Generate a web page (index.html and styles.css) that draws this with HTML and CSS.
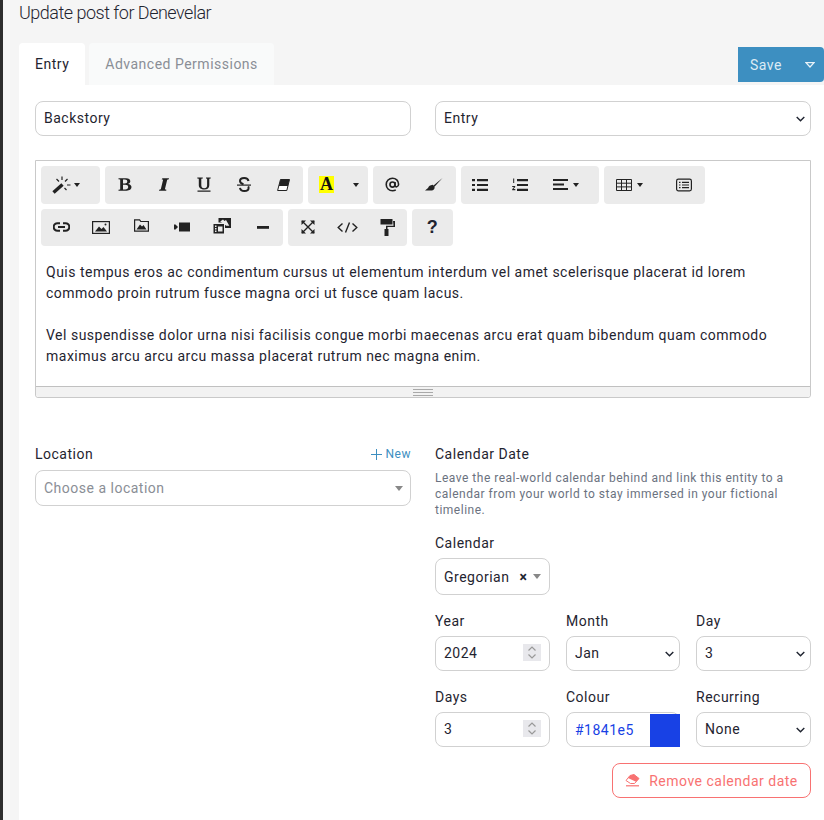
FILE: index.html
```html
<html>
    <head>
        <meta charset="utf-8">
        <title>Update post for Denevelar</title>
        <link rel="stylesheet" href="styles.css">
    </head>
    <body>
    <div class="sidebar"></div>
    <div class="main">
        <h1 class="page-title">Update post for Denevelar</h1>

        <div class="top-row">
            <div class="tabs">
                <div class="tab tab-active">Entry</div>
                <div class="tab">Advanced Permissions</div>
            </div>
            <div class="save-btn">
                <span>Save</span>
                <svg class="save-caret" width="10" height="6" viewBox="0 0 10 6"><path d="M1 .7h8L5 5z" fill="none" stroke="#e8f2f8" stroke-width="1.200"/></svg>
            </div>
        </div>

        <div class="panel">
            <div class="two-col">
                <input class="field" type="text" value="Backstory">
                <select class="field"><option>Entry</option></select>
            </div>

            <div class="editor">
                <div class="toolbar">
                    <div class="group">
                        <div class="tool tool-wide">
                            <svg width="19" height="18" viewBox="0 0 19 18"><path d="M1.500 16.500 10.500 8.500" stroke="#222" stroke-width="3.400"/><path d="M10 .5v3.500M15 9h3.500M4.500 3l2.500 2.500M15.500 3 13 5.500M14.500 14l-2-2" stroke="#222" stroke-width="1.200"/></svg>
                            <i class="caret"></i>
                        </div>
                    </div>
                    <div class="group">
                        <div class="tool"><svg width="14" height="13" viewBox="0 0 14 13"><path fill-rule="evenodd" d="M.5.3h7.500c2.800 0 4.300 1 4.300 2.900 0 1.400-1 2.300-2.300 2.700 1.900.3 3.500 1.300 3.500 3.200 0 2.300-2 3.600-4.800 3.600H.5v-1l1.700-.3V1.600L.5 1.300zM5 1.500v4h1.900c1.600 0 2.400-.7 2.400-2S8.500 1.500 6.900 1.500zM5 6.700v4.800h2.300c1.800 0 2.900-.8 2.900-2.400S9.100 6.700 7.200 6.700z" fill="#222"/></svg></div>
                        <div class="tool"><svg width="10" height="13" viewBox="0 0 10 13"><path d="M3.500.3H10l-.2 1-1.600.4-2.300 9.600 1.500.4-.2 1H0l.2-1 1.600-.4 2.300-9.600-1.500-.4z" fill="#222"/></svg></div>
                        <div class="tool"><svg width="14" height="15" viewBox="0 0 14 15"><path d="M.3.500h5.500v1l-1.500.3v6.400c0 2 .9 3 2.900 3s2.900-1 2.900-3V1.800L9 1.500v-1h4.700v1l-1.400.3v6.500c0 2.800-1.800 4.200-5 4.200S1.800 11.100 1.800 8.300V1.800L.3 1.500zM.5 13.500h13v1.300H.5z" fill="#222"/></svg></div>
                        <div class="tool"><svg width="14" height="15" viewBox="0 0 14 15"><path d="M11.500 4c-.3-1.800-1.900-3-4.300-3C4.700 1 3 2.200 3 4.100c0 1.900 1.800 2.700 3.500 3.200M3 10.800c.3 2 2 3.200 4.300 3.200 2.600 0 4.300-1.200 4.300-3.100 0-.6-.1-1.100-.4-1.500" fill="none" stroke="#222" stroke-width="2"/><path d="M0 7.500h14v1.200H0z" fill="#222"/></svg></div>
                        <div class="tool"><svg width="13" height="12" viewBox="0 0 13 12"><path d="M3.500.5h9l-2.700 11H.6z" fill="#fff" stroke="#222"/><path d="M3.500.5h9l-1.600 6.500h-9z" fill="#222"/></svg></div>
                    </div>
                    <div class="group">
                        <div class="tool tool-color"><span class="color-a">A</span></div>
                        <div class="tool tool-split"><i class="caret"></i></div>
                    </div>
                    <div class="group group-at">
                        <div class="tool"><svg width="15" height="15" viewBox="0 0 16 16"><circle cx="8" cy="8" r="2.700" fill="none" stroke="#222" stroke-width="1.800"/><path d="M10.700 5.300V9c0 2.300 3.800 2 3.800-1.200C14.500 4 11.500 1.300 8 1.300 4.300 1.300 1.300 4.300 1.300 8s3 6.700 6.700 6.700c1.500 0 2.500-.3 3.500-.9" fill="none" stroke="#222" stroke-width="1.700"/></svg></div>
                        <div class="tool tool-brush"><svg width="18" height="13" viewBox="0 0 18 13"><path d="M17.500 0 8.500 7.500l1 1.200z" fill="#222"/><path d="M7.800 6.800C5 7 3.800 8.500 3 10L0 12.500h7c2-.4 3-2 2.500-4z" fill="#222"/></svg></div>
                    </div>
                    <div class="group group-lists">
                        <div class="tool"><svg width="16" height="14" viewBox="0 0 16 14"><path d="M0 1h3v2.200H0zM5 1h11v2.200H5zM0 5.900h3v2.200H0zM5 5.900h11v2.200H5zM0 10.800h3V13H0zM5 10.800h11V13H5z" fill="#222"/></svg></div>
                        <div class="tool"><svg width="16" height="14" viewBox="0 0 16 14"><path d="M1.200.5h1v4.500h-1zM.2 8h3v1L1.500 11h1.800v1.200H.2v-1L2 9H.2zM5 1h11v2.200H5zM5 5.900h11v2.200H5zM5 10.800h11V13H5z" fill="#222"/></svg></div>
                        <div class="tool tool-wide-align">
                            <svg width="15" height="11" viewBox="0 0 15 11"><path d="M0 0h15v2H0zM0 4.500h11v2H0zM0 9h15v2H0z" fill="#222"/></svg>
                            <i class="caret"></i>
                        </div>
                    </div>
                    <div class="group">
                        <div class="tool tool-wide-table">
                            <svg width="16" height="12" viewBox="0 0 16 12"><path d="M.5.500h15v11H.5zM.5 4.200h15M.5 7.900h15M5.500.5v11M10.500.5v11" fill="none" stroke="#222"/></svg>
                            <i class="caret"></i>
                        </div>
                        <div class="tool tool-help-list"><svg width="16" height="14" viewBox="0 0 16 14"><rect x=".6" y="1.100" width="14.800" height="11.800" rx="1.800" fill="none" stroke="#222" stroke-width="1.200"/><path d="M3 3.800h1.500V5H3zM6 3.800h7V5H6zM3 6.400h1.500v1.200H3zM6 6.400h7v1.200H6zM3 9h1.500v1.200H3zM6 9h7v1.200H6z" fill="#222"/></svg></div>
                    </div>
                    <div class="group group-media">
                        <div class="tool"><svg width="17" height="10" viewBox="0 0 16 10"><path d="M6.500 1.200H4a3.800 3.800 0 0 0 0 7.600h2.500M9.500 1.200H12a3.800 3.800 0 0 1 0 7.600H9.500M4.500 5h7" fill="none" stroke="#222" stroke-width="2"/></svg></div>
                        <div class="tool"><svg width="18" height="13" viewBox="0 0 18 13"><rect x=".6" y=".6" width="16.800" height="11.800" fill="none" stroke="#222" stroke-width="1.200"/><path d="M3 10.500 7 5.500l2.500 2.500 2-2 3.500 4.500z" fill="#222"/><circle cx="13.500" cy="3.500" r="1" fill="#222"/></svg></div>
                        <div class="tool tool-raised"><svg width="15" height="13" viewBox="0 0 15 13"><path d="M.6 2.500V.8h5l1.200 1.700h7.600v9.700H.6z" fill="none" stroke="#222" stroke-width="1.200"/><path d="M2.500 10.500 6 5.500l2 2 1.500-1.500 3 4.500z" fill="#222"/></svg></div>
                        <div class="tool"><svg width="16" height="10" viewBox="0 0 16 10"><path d="M5 .5h11v9H5z" fill="#222"/><path d="M0 2.500h1.500L4 5 1.500 7.500H0z" fill="#222"/></svg></div>
                        <div class="tool tool-raised"><svg width="18" height="16" viewBox="0 0 18 16"><path d="M5.500 0H18v10h-6V4.500H5.500z" fill="#222"/><path d="M7.200 3.400 10 1.500l1.500 1.500 1.500-1 3.300 5.800h-3z" fill="#ebebeb"/><path d="M.5 6h10.500v9.500H.5zM2 7.500v1.500h1.500V7.500zM2 10v1.500h1.500V10zM2 12.500V14h1.500v-1.500zM5 8.500v5h4.500v-5z" fill="#222" fill-rule="evenodd"/></svg></div>
                        <div class="tool"><svg width="12" height="3" viewBox="0 0 12 3"><path d="M0 0h12v2.800H0z" fill="#222"/></svg></div>
                    </div>
                    <div class="group group-view">
                        <div class="tool"><svg width="14" height="14" viewBox="0 0 14 14"><path d="M1 1l12 12M13 1 1 13" stroke="#222" stroke-width="1.400"/><path d="M.5.500h4.500L.5 5zM13.500.500H9l4.500 4.500zM.5 13.500H5L.5 9zM13.500 13.500H9l4.500-4.500z" fill="#222"/></svg></div>
                        <div class="tool"><svg width="21" height="11" viewBox="0 0 21 11"><path d="M5.500 1.500 1.200 5.500l4.300 4M15.500 1.500l4.300 4-4.300 4M12.500.5l-4 10" fill="none" stroke="#222" stroke-width="1.400"/></svg></div>
                        <div class="tool"><svg width="15" height="17" viewBox="0 0 15 17"><path d="M.5 0h12v5.500H.5zM13 2h2v6H7.500v2H6V6.800h7.500z" fill="#222"/><path d="M4.500 10h4v7h-4z" fill="#222"/></svg></div>
                    </div>
                    <div class="group">
                        <div class="tool tool-help">?</div>
                    </div>
                </div>

                <div class="editable">
                    <p>Quis tempus eros ac condimentum cursus ut elementum interdum vel amet scelerisque placerat id lorem commodo proin rutrum fusce magna orci ut fusce quam lacus.</p>
                    <p>Vel suspendisse dolor urna nisi facilisis congue morbi maecenas arcu erat quam bibendum quam commodo maximus arcu arcu arcu massa placerat rutrum nec magna enim.</p>
                </div>
                <div class="statusbar"><span class="grip"></span></div>
            </div>

            <div class="two-col form-row">
                <div>
                    <div class="label-row">
                        <label class="label">Location</label>
                        <a class="new-link"><svg width="11" height="11" viewBox="0 0 11 11"><path d="M5.500 0v11M0 5.500h11" stroke="#3d8fc1"/></svg>New</a>
                    </div>
                    <div class="field fake-select placeholder">Choose a location<i class="caret caret-grey"></i></div>
                </div>

                <div>
                    <label class="label">Calendar Date</label>
                    <p class="help">Leave the real-world calendar behind and link this entity to a calendar from your world to stay immersed in your fictional timeline.</p>

                    <label class="label label-calendar">Calendar</label>
                    <div class="field fake-select calendar-select">Gregorian<span class="clear">×</span><i class="caret caret-grey"></i></div>

                    <div class="date-grid">
                        <div>
                            <label class="label">Year</label>
                            <input class="field" type="number" value="2024">
                        </div>
                        <div>
                            <label class="label">Month</label>
                            <select class="field"><option>Jan</option></select>
                        </div>
                        <div>
                            <label class="label">Day</label>
                            <select class="field"><option>3</option></select>
                        </div>
                        <div>
                            <label class="label">Days</label>
                            <input class="field" type="number" value="3">
                        </div>
                        <div>
                            <label class="label">Colour</label>
                            <div class="field colour-field">
                                <span class="colour-text">#1841e5</span>
                                <span class="colour-swatch"></span>
                            </div>
                        </div>
                        <div>
                            <label class="label">Recurring</label>
                            <select class="field"><option>None</option></select>
                        </div>
                    </div>

                    <div class="remove-row">
                        <div class="remove-btn">
                            <svg width="15" height="13" viewBox="0 0 15 13"><path d="M5 1.500 9 .5l5 4-4.500 5H5.500L1 6.500z" fill="#fff" stroke="#f87272"/><path d="M5 1.500 9 .5l5 4-3 3.300L3 4z" fill="#f87272"/><path d="M1 11.800h13" stroke="#f87272" stroke-width="1.200"/></svg>
                            Remove calendar date
                        </div>
                    </div>
                </div>
            </div>
        </div>
    </div>
    </body>
</html>
```

FILE: styles.css
```css
html, body {
    margin: 0;
    height: 820px;
    overflow: hidden;
}

body {
    display: flex;
    font-family: Roboto, sans-serif;
    font-size: 14px;
    letter-spacing: 0.5px;
    background-color: #f5f5f5;
    color: #1f2430;
}

.sidebar {
    width: 3px;
    flex: none;
    background-color: #2d2d2d;
}

.main {
    flex: 1;
    min-width: 0;
    padding-left: 16px;
    display: flex;
    flex-direction: column;
}

.page-title {
    margin: 0;
    height: 43px;
    padding-top: 2px;
    box-sizing: border-box;
    line-height: 22px;
    font-size: 18px;
    font-weight: 300;
    letter-spacing: -0.5px;
}

.top-row {
    display: flex;
    justify-content: space-between;
}

.tabs {
    display: flex;
    gap: 4px;
}

.tab {
    height: 42px;
    line-height: 42px;
    padding: 0 16px;
    background-color: #f9fafa;
    color: #8a8e96;
    border-radius: 4px 4px 0 0;
}

.tab-active {
    background-color: #fff;
    color: #1f2430;
}

.save-btn {
    margin-top: 4px;
    width: 86px;
    height: 35px;
    box-sizing: border-box;
    padding: 0 9px 0 12px;
    display: flex;
    align-items: center;
    justify-content: space-between;
    background-color: #3d8fc1;
    color: #dcebf4;
    border-radius: 0 4px 4px 0;
}

.panel {
    flex: 1;
    background-color: #fff;
    padding: 16px 13px 0 16px;
}

.two-col {
    display: grid;
    grid-template-columns: 376px 376px;
    gap: 24px;
}

.field {
    display: block;
    width: 100%;
    height: 35px;
    box-sizing: border-box;
    padding: 0 8px 2px;
    font-family: Roboto, sans-serif;
    font-size: 14px;
    letter-spacing: 0.5px;
    color: #1f2430;
    background-color: #fff;
    border: 1px solid #d1d1d1;
    border-radius: 8px;
}

select.field {
    appearance: none;
    background-image: url("data:image/svg+xml,%3Csvg xmlns='http://www.w3.org/2000/svg' width='9' height='6' viewBox='0 0 9 6'%3E%3Cpath d='M.7 1l3.800 3.800L8.300 1' fill='none' stroke='%231f2430' stroke-width='1.400'/%3E%3C/svg%3E");
    background-repeat: no-repeat;
    background-position: right 5px center;
}

input[type=number]::-webkit-inner-spin-button {
    appearance: none;
    opacity: 1;
    width: 18px;
    height: 17px;
    background-color: #e8e8ec;
    background-image: url("data:image/svg+xml,%3Csvg xmlns='http://www.w3.org/2000/svg' width='18' height='17' viewBox='0 0 18 17'%3E%3Cpath d='M5.500 6.500 9 3l3.500 3.500M5.500 10.500 9 14l3.500-3.500' fill='none' stroke='%23999' stroke-width='1.200'/%3E%3C/svg%3E");
}

.editor {
    margin-top: 24px;
    border: 1px solid #c9c9c9;
    border-radius: 0 0 3px 3px;
}

.toolbar {
    display: flex;
    flex-wrap: wrap;
    gap: 5px;
    padding: 5px 5px 0;
}

.group {
    display: flex;
    background-color: #ebebeb;
    border-radius: 4px;
}

.tool {
    width: 39.6px;
    height: 37.5px;
    display: flex;
    align-items: center;
    justify-content: center;
    gap: 3px;
}

.tool-raised svg {
    margin-top: -3px;
}

.tool-wide {
    width: 59px;
    box-sizing: border-box;
    padding-right: 10px;
}

.tool-color {
    width: 37px;
}

.tool-split {
    width: 23px;
}

.tool-brush {
    width: 43px;
}

.tool-wide-align {
    width: 59px;
    box-sizing: border-box;
    padding-right: 6px;
    gap: 5px;
}

.tool-wide-table {
    width: 60px;
    box-sizing: border-box;
    padding-right: 8px;
    gap: 5px;
}

.tool-help-list {
    width: 41px;
}

.group-media .tool {
    width: 40.33px;
}

.group-view .tool {
    width: 39.67px;
}

.tool-help {
    width: 41px;
    font-family: "Liberation Sans", sans-serif;
    font-weight: bold;
    font-size: 18px;
}

.caret {
    display: inline-block;
    width: 0;
    height: 0;
    border-left: 3.5px solid transparent;
    border-right: 3.5px solid transparent;
    border-top: 4px solid #222;
}

.caret-grey {
    border-left-width: 4.5px;
    border-right-width: 4.5px;
    border-top-color: #888;
    border-top-width: 5px;
}

.color-a {
    width: 15px;
    height: 17px;
    line-height: 17px;
    text-align: center;
    background-color: #ff0;
    color: #111;
    font-family: "Liberation Serif", serif;
    font-weight: bold;
    font-size: 18px;
    letter-spacing: 0;
}

.editable {
    padding: 16px 10px 19px;
    line-height: 21px;
    color: #1f2430;
}

.editable p {
    margin: 0 0 21px;
}

.editable p:last-child {
    margin-bottom: 0;
}

.statusbar {
    height: 10px;
    background-color: #f2f2f2;
    border-top: 1px solid #c0c0c0;
    border-radius: 0 0 3px 3px;
    display: flex;
    justify-content: center;
    align-items: center;
}

.grip {
    width: 20px;
    height: 5px;
    border-top: 1px solid #a9a9a9;
    border-bottom: 1px solid #a9a9a9;
    background: linear-gradient(#f2f2f2 0 40%, #a9a9a9 40% 60%, #f2f2f2 60%);
}

.form-row {
    margin-top: 46px;
}

.label {
    display: block;
    height: 20px;
    line-height: 20px;
}

.label-row {
    display: flex;
    justify-content: space-between;
    align-items: center;
    height: 20px;
    margin-bottom: 6px;
}

.new-link {
    display: flex;
    align-items: center;
    gap: 4px;
    color: #3d8fc1;
    font-size: 12px;
}

.fake-select {
    height: 36px;
    padding-bottom: 0;
    display: flex;
    align-items: center;
}

.placeholder {
    color: #8a8e96;
}

.placeholder .caret {
    margin-left: auto;
    margin-right: -1px;
}

.help {
    margin: 6px 0 0;
    font-size: 12px;
    line-height: 16px;
    color: #6b7280;
}

.label-calendar {
    margin-top: 15px;
}

.calendar-select {
    margin-top: 5px;
    width: 115px;
    height: 37px;
}

.clear {
    margin-left: 10px;
    font-weight: bold;
}

.calendar-select .caret {
    margin-left: 6px;
}

.date-grid {
    display: grid;
    grid-template-columns: 115px 114px 115px;
    column-gap: 16px;
    row-gap: 16px;
    margin-top: 16px;
}

.date-grid .label {
    margin-bottom: 5px;
}

.colour-field {
    display: flex;
    align-items: center;
    justify-content: space-between;
    padding: 0 0 0 8px;
}

.colour-text {
    color: #1841e5;
}

.colour-swatch {
    align-self: stretch;
    width: 30px;
    margin: 1px -1px -1px 0;
    background-color: #1841e5;
}

.remove-row {
    display: flex;
    justify-content: flex-end;
    margin-top: 16px;
}

.remove-btn {
    width: 199px;
    height: 35px;
    box-sizing: border-box;
    display: flex;
    align-items: center;
    justify-content: center;
    gap: 9px;
    color: #f87272;
    border: 1px solid #f87272;
    border-radius: 8px;
}
```
